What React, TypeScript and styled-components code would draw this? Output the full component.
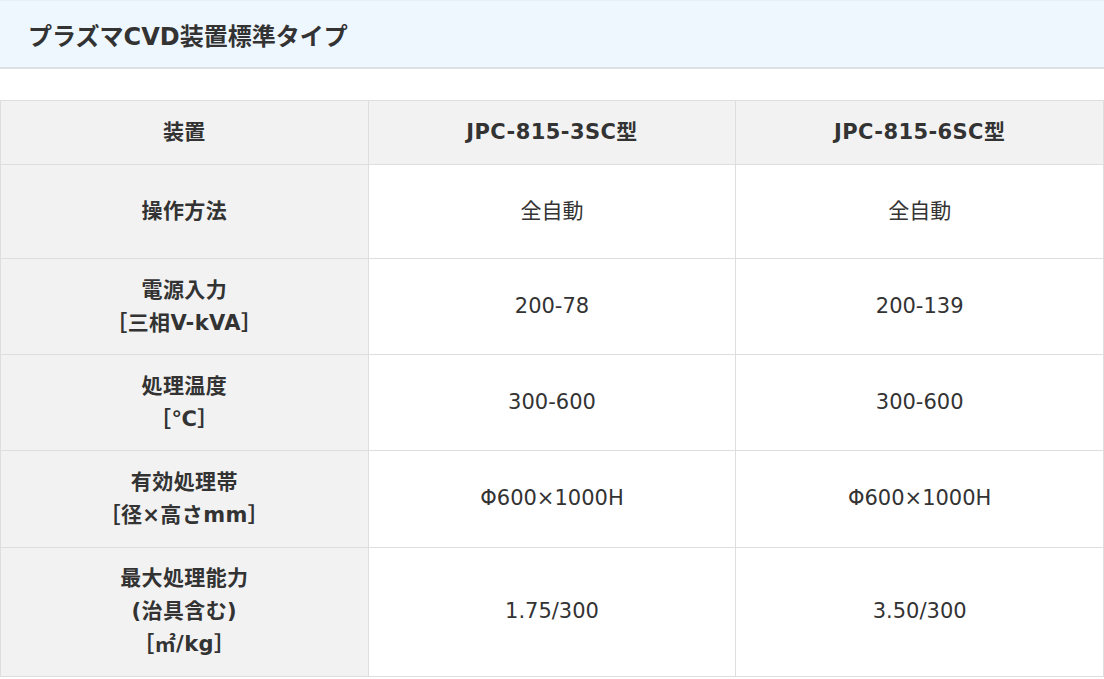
import styled, { createGlobalStyle } from "styled-components";

type SpecRow = {
  label: string[];
  values: [string, string];
};

const rows: SpecRow[] = [
  { label: ["操作方法"], values: ["全自動", "全自動"] },
  { label: ["電源入力", "［三相V-kVA］"], values: ["200-78", "200-139"] },
  { label: ["処理温度", "［℃］"], values: ["300-600", "300-600"] },
  { label: ["有効処理帯", "［径×高さmm］"], values: ["Φ600×1000H", "Φ600×1000H"] },
  { label: ["最大処理能力", "(治具含む)", "［㎡/kg］"], values: ["1.75/300", "3.50/300"] },
];

const GlobalStyle = createGlobalStyle`
  body {
    margin: 0;
    background: #fff;
    color: #333;
    font-family: "DejaVu Sans", "Noto Sans CJK JP", sans-serif;
  }
`;

const Page = styled.div`
  display: flex;
  flex-direction: column;
  gap: 31px;
`;

const Heading = styled.h2`
  margin: 0;
  height: 66px;
  padding: 0 28px;
  display: flex;
  align-items: center;
  background: #eff7fe;
  border-top: 1px solid #e8eef4;
  border-bottom: 2px solid #dde1e6;
  font-size: 24px;
  font-weight: 700;
  color: #333;
`;

const Table = styled.table`
  width: 100%;
  border-collapse: collapse;
  table-layout: fixed;
  font-size: 21px;
  line-height: 33px;
`;

const Cell = styled.td<{ $head?: boolean }>`
  border: 1.5px solid #dedede;
  text-align: center;
  vertical-align: middle;
  padding: ${({ $head }) => ($head ? "14.6px 10px" : "30px 10px")};
  background: ${({ $head }) => ($head ? "#f2f2f2" : "#fff")};
  font-weight: ${({ $head }) => ($head ? 700 : 400)};
  letter-spacing: ${({ $head }) => ($head ? "0.4px" : "0")};
  color: #333;
`;

const HeadRow = styled.tr`
  height: 64px;
`;

export default function App() {
  return (
    <>
      <GlobalStyle />
      <Page>
        <Heading>プラズマCVD装置標準タイプ</Heading>
        <Table>
          <tbody>
            <HeadRow>
              <Cell as="th" $head>装置</Cell>
              <Cell as="th" $head>JPC-815-3SC型</Cell>
              <Cell as="th" $head>JPC-815-6SC型</Cell>
            </HeadRow>
            {rows.map((row) => (
              <tr key={row.label[0]}>
                <Cell as="th" $head>
                  {row.label.map((line, i) => (
                    <div key={i}>{line}</div>
                  ))}
                </Cell>
                <Cell>{row.values[0]}</Cell>
                <Cell>{row.values[1]}</Cell>
              </tr>
            ))}
          </tbody>
        </Table>
      </Page>
    </>
  );
}
